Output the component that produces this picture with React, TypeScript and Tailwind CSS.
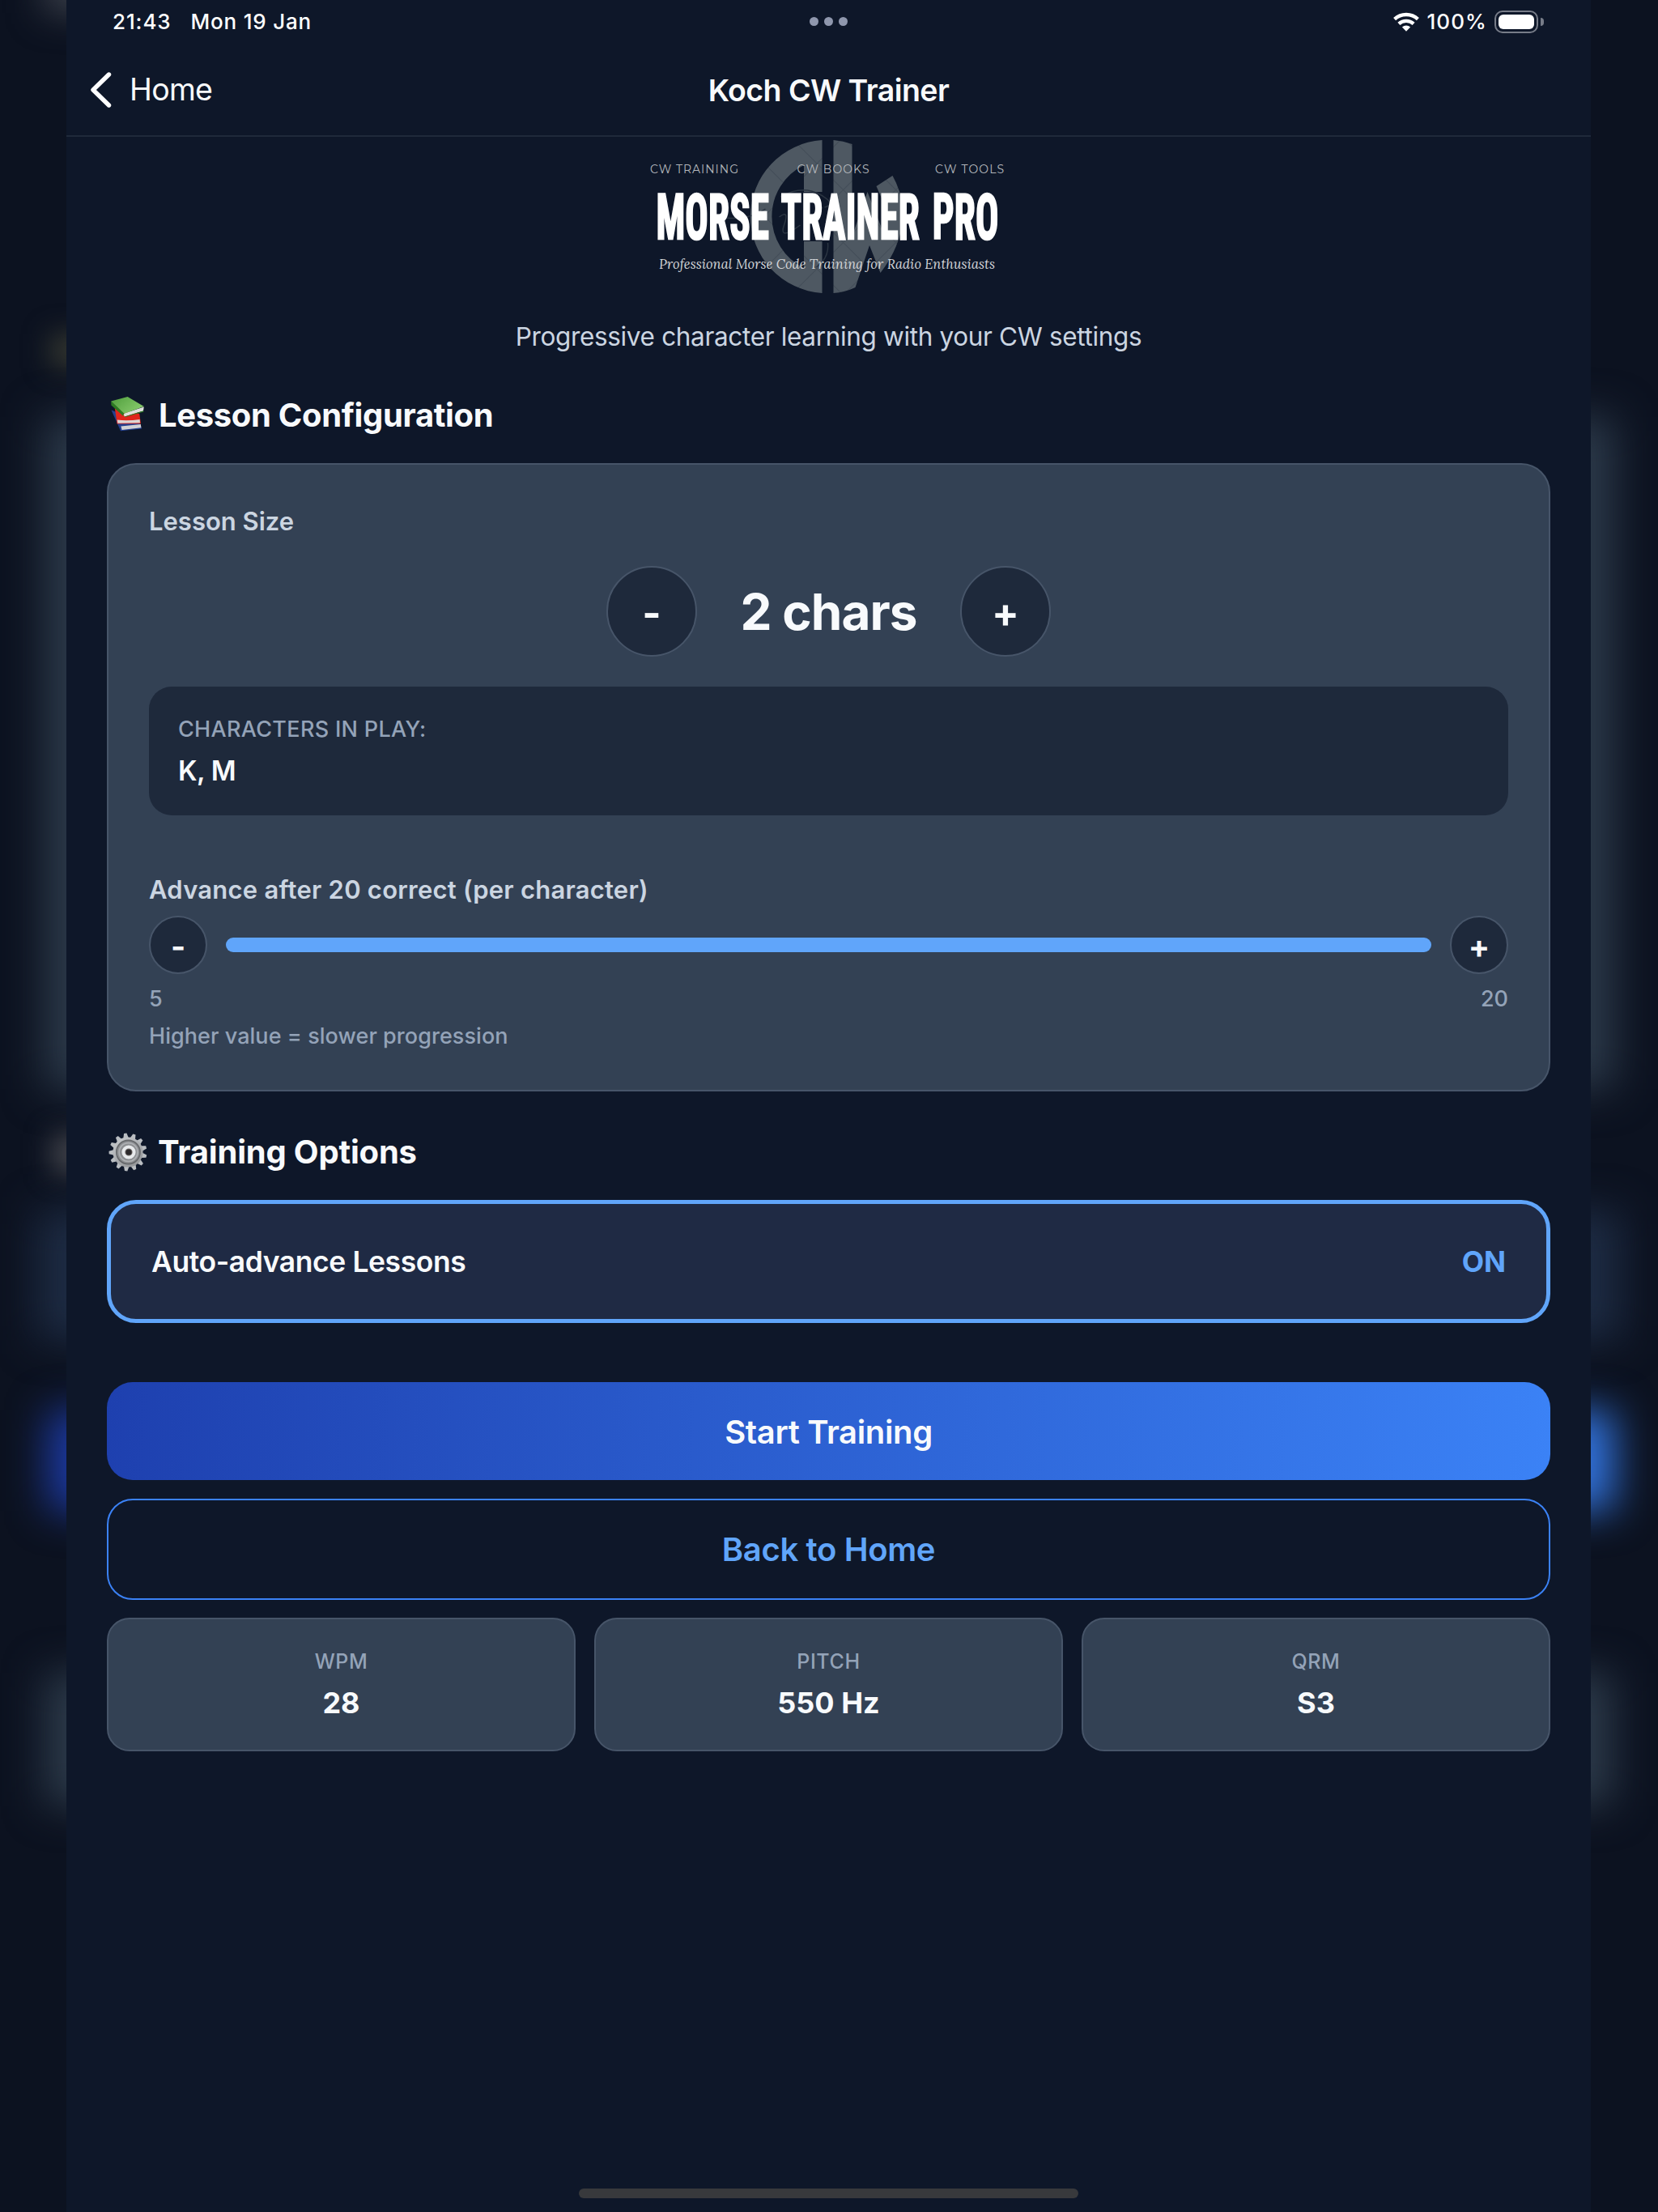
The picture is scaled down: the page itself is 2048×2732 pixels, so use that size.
const stats = [
  { label: 'WPM', value: '28' },
  { label: 'PITCH', value: '550 Hz' },
  { label: 'QRM', value: 'S3' },
]

const gearTeeth = Array.from({ length: 13 }, (_, i) => (i * 360) / 13 - 8)

function WifiIcon() {
  return (
    <svg width="32" height="24" viewBox="0 0 32 24" fill="none">
      <path d="M1.6 8.7A21.2 21.2 0 0 1 30.4 8.7" stroke="#fff" strokeWidth="4.4" />
      <path d="M6.9 14.4A13.4 13.4 0 0 1 25.1 14.4" stroke="#fff" strokeWidth="4.4" />
      <path d="M10.9 18.6A7.4 7.4 0 0 1 21.1 18.6L16 23.8Z" fill="#fff" />
    </svg>
  )
}

function BatteryIcon() {
  return (
    <div className="flex items-center gap-[3px]">
      <div className="h-[28px] w-[54px] rounded-[10px] border-2 border-[#777c88] p-[3px]">
        <div className="h-full w-full rounded-[6px] bg-white" />
      </div>
      <div className="h-[10px] w-[4px] rounded-r-full bg-[#777c88]" />
    </div>
  )
}

function BooksIcon() {
  return (
    <svg width="48" height="48" viewBox="0 0 48 48">
      <defs>
        <linearGradient id="cover" x1="0" y1="0" x2="1" y2="0.6">
          <stop offset="0" stopColor="#4f9e3c" />
          <stop offset="1" stopColor="#86c96b" />
        </linearGradient>
      </defs>
      <path d="M3.5 17.5L15 43.2L41 40.4L39.5 35L10 20Z" fill="#24408f" />
      <path d="M15.4 37.4L39.8 35L40.4 39.2L16.6 42Z" fill="#d0d1d6" />
      <path d="M7.8 15L10.6 34.6L40 34.2L38.2 22L20 18Z" fill="#e0261c" />
      <path d="M10.8 29.6Q24 31 38.6 29L39 33.2L11.4 33.8Z" fill="#dcd6d4" />
      <path d="M3.2 6.6L3.4 11.4L18.6 25.2Q17.6 23 19.8 21.4Z" fill="#2c7a22" />
      <path d="M19.8 21.4L43.8 13.6L43 18.4L20 25.4Q18 23.4 19.8 21.4Z" fill="#dfe2dd" />
      <path d="M3.2 6.6L23.6 1L43.8 13L19.6 21.8Z" fill="url(#cover)" />
      <path d="M20 25.4L43 18.4L43.8 19.6L20.2 26.2Z" fill="#2c7a22" />
    </svg>
  )
}

function GearIcon() {
  return (
    <svg width="48" height="48" viewBox="0 0 48 48">
      <defs>
        <linearGradient id="steel" x1="0" y1="0" x2="0.6" y2="1">
          <stop offset="0" stopColor="#c9cccf" />
          <stop offset="1" stopColor="#96989b" />
        </linearGradient>
      </defs>
      {gearTeeth.map((angle) => (
        <path key={angle} d="M20.6 7L22.3 0.6H25.7L27.4 7Z" fill="#b9bdc1" transform={`rotate(${angle} 24 24)`} />
      ))}
      <circle cx="24" cy="24" r="18.6" fill="url(#steel)" />
      <circle cx="24.4" cy="24" r="14.6" fill="#8d8f92" stroke="#66686b" strokeWidth="1.6" />
      <circle cx="24.6" cy="24" r="11.4" fill="none" stroke="#aeb0b3" strokeWidth="1.6" />
      <circle cx="25" cy="24" r="6.6" fill="#6f6a68" stroke="#e8eaec" strokeWidth="4" />
      <circle cx="25" cy="24" r="3.6" fill="#2d2a2c" />
    </svg>
  )
}

function Logo() {
  return (
    <svg className="mx-auto block shrink-0 overflow-visible" width="480" height="194" viewBox="783.5 169 480 194">
      <defs>
        <pattern id="lattice" width="46" height="46" patternUnits="userSpaceOnUse" patternTransform="rotate(45 1022 267)">
          <rect width="46" height="46" fill="#4e5862" />
          <path d="M0 0H46M0 0V46" stroke="#434d58" strokeWidth="2" />
        </pattern>
      </defs>
      <g fill="url(#lattice)">
        <path d="M1015 173A94.700 94.700 0 0 0 1015 362V298H992.5V331A70.700 70.700 0 0 1 992.5 204V237H1015Z" />
        <path d="M1029 173Q1041 174 1052 178V292L1071 237L1091 288L1096 262L1082 230L1102 217Q1115 240 1115 268Q1112 305 1087 337L1073.500 303L1056 355Q1043 361 1029 362Z" />
      </g>
      <path
        d="M896 269Q925 272 945 258M964 243Q990 228 1012 240T1018 256M1008 330Q1024 318 1022 300M962 268Q975 258 968 278T988 278"
        fill="none"
        stroke="#2b3542"
        strokeWidth="1.500"
      />
      <g fill="#b4b7bc" fontFamily="Montserrat, 'Open Sans', sans-serif" fontSize="14">
        <text x="802.500" y="214" textLength="109">CW TRAINING</text>
        <text x="984" y="214" textLength="89">CW BOOKS</text>
        <text x="1154.500" y="214" textLength="85">CW TOOLS</text>
      </g>
      <text
        transform="translate(810 295) scale(0.605 1)"
        className="font-['Roboto'] font-bold font-stretch-[75%]"
        fontSize="78"
        wordSpacing="8"
        fill="#fff"
        stroke="#fff"
        strokeWidth="2.400"
        textLength="699"
      >
        MORSE TRAINER PRO
      </text>
      <text
        x="813.500"
        y="331.500"
        fontFamily="Lora, 'Liberation Serif', serif"
        fontStyle="italic"
        fontSize="17.500"
        fill="#d3d5d8"
        textLength="415"
        lengthAdjust="spacingAndGlyphs"
      >
        Professional Morse Code Training for Radio Enthusiasts
      </text>
    </svg>
  )
}

// Blurred spill of the page that fills the margin on the left
function LeftMargin() {
  return (
    <div className="relative w-[82px] shrink-0 overflow-hidden bg-[#0c1220]">
      <div className="absolute top-[-40px] left-[54px] h-[56px] w-[120px] bg-[#3a3f49] blur-[22px]" />
      <div className="absolute top-[412px] left-[62px] h-[42px] w-[60px] bg-[#33362f] blur-[16px]" />
      <div className="absolute top-[515px] left-[55px] h-[830px] w-[160px] bg-[#2c3a4a] blur-[26px]" />
      <div className="absolute top-[1400px] left-[64px] h-[50px] w-[60px] bg-[#404249] blur-[16px]" />
      <div className="absolute top-[1495px] left-[46px] h-[160px] w-[160px] bg-[#1d2b43] blur-[25px]" />
      <div className="absolute top-[1742px] left-[60px] h-[124px] w-[160px] bg-[#1c3aa4] blur-[25px]" />
      <div className="absolute top-[2066px] left-[56px] h-[164px] w-[160px] bg-[#2c3a4a] blur-[25px]" />
    </div>
  )
}

function RightMargin() {
  return (
    <div className="relative w-[83px] shrink-0 overflow-hidden bg-[#0c1220]">
      <div className="absolute top-[515px] right-[54px] h-[830px] w-[160px] bg-[#2c3a4a] blur-[26px]" />
      <div className="absolute top-[1495px] right-[46px] h-[160px] w-[160px] bg-[#1d2b43] blur-[25px]" />
      <div className="absolute top-[1742px] right-[54px] h-[124px] w-[160px] bg-[#3273dc] blur-[25px]" />
      <div className="absolute top-[2066px] right-[56px] h-[164px] w-[160px] bg-[#2c3a4a] blur-[25px]" />
    </div>
  )
}

export default function App() {
  return (
    <div className="flex h-[2732px] w-[2048px] overflow-hidden bg-[#0c1220] font-['Inter',sans-serif] text-[#f8fafc]">
      <LeftMargin />

      <div className="flex w-[1883px] shrink-0 flex-col bg-[#0e1729]">
        {/* Status bar */}
        <div className="grid h-[53px] shrink-0 grid-cols-3 items-center text-[26px] leading-[36px] font-medium text-white">
          <div className="flex gap-[24px] pl-[57px]">
            <span className="tracking-[0.9px]">21:43</span>
            <span className="tracking-[0.8px]">Mon 19 Jan</span>
          </div>
          <div className="flex justify-center gap-[7px]">
            <span className="size-[11px] rounded-full bg-[#8f97ad]" />
            <span className="size-[11px] rounded-full bg-[#8f97ad]" />
            <span className="size-[11px] rounded-full bg-[#8f97ad]" />
          </div>
          <div className="flex items-center justify-end pr-[58px]">
            <WifiIcon />
            <span className="mr-[9px] ml-[9px] tracking-[1.1px]">100%</span>
            <BatteryIcon />
          </div>
        </div>

        {/* Header */}
        <header className="grid h-[116px] shrink-0 grid-cols-3 items-center border-b-2 border-[#1f293a] pt-[2px] text-[38px] leading-[48px]">
          <button className="flex items-center pl-[29px]">
            <svg width="28" height="44" viewBox="0 0 28 44" fill="none">
              <path d="M23.500 3L4 22L23.500 41" stroke="#fff" strokeWidth="5.400" strokeLinecap="round" strokeLinejoin="round" />
            </svg>
            <span className="ml-[21px] text-[37.5px] tracking-[-0.7px]">Home</span>
          </button>
          <h1 className="pt-[2px] text-center text-[37.5px] font-semibold tracking-[-0.55px]">Koch CW Trainer</h1>
        </header>

        <Logo />

        <p className="mt-[31px] text-center text-[31.5px] leading-[44px] tracking-[-0.34px] text-[#cbd5e1]">
          Progressive character learning with your CW settings
        </p>

        <main className="flex flex-1 flex-col px-[50px]">
          <h2 className="mt-[51px] flex h-[48px] items-center gap-[14px] pl-[2px] text-[40px] leading-[48px] font-bold tracking-[-0.35px]">
            <BooksIcon />
            Lesson Configuration
          </h2>

          <section className="mt-[35px] h-[776px] shrink-0 rounded-[36px] border-2 border-[#475569] bg-[#334154] px-[50px] pt-[48px]">
            <h3 className="text-[31px] leading-[44px] font-semibold text-[#cbd5e1]">Lesson Size</h3>

            <div className="mt-[33px] flex items-center justify-center">
              <button className="size-[112px] rounded-full border-2 border-[#475569] bg-[#1e293b] pt-[4px] text-[50px] leading-none font-bold">-</button>
              <span className="w-[325px] pt-[1px] text-center text-[62px] leading-[80px] font-bold tracking-[-1px]">2 chars</span>
              <button className="size-[112px] rounded-full border-2 border-[#475569] bg-[#1e293b] pt-[4px] text-[50px] leading-none font-bold">+</button>
            </div>

            <div className="mt-[37px] h-[159px] rounded-[28px] bg-[#1e293b] px-[36px] pt-[33px]">
              <p className="text-[27px] leading-[40px] font-medium tracking-[0.31px] text-[#94a3b8]">CHARACTERS IN PLAY:</p>
              <p className="mt-[7px] text-[33.5px] leading-[48px] font-semibold tracking-[-0.44px]">K, M</p>
            </div>

            <h3 className="mt-[70px] text-[31px] leading-[44px] font-semibold tracking-[0.23px] text-[#cbd5e1]">
              Advance after 20 correct (per character)
            </h3>
            <div className="mt-[10px] flex items-center gap-[23px]">
              <button className="size-[72px] shrink-0 rounded-full border-2 border-[#475569] bg-[#1e293b] pt-[2px] text-[39px] leading-none font-bold">-</button>
              <div className="h-[18px] flex-1 rounded-full bg-[#60a5fa]" />
              <button className="size-[72px] shrink-0 rounded-full border-2 border-[#475569] bg-[#1e293b] pt-[2px] text-[39px] leading-none font-bold">+</button>
            </div>
            <div className="mt-[13px] flex justify-between text-[27px] leading-[36px] font-medium text-[#94a3b8]">
              <span>5</span>
              <span>20</span>
            </div>
            <p className="mt-[10px] text-[27px] leading-[36px] font-medium tracking-[0.05px] text-[#94a3b8]">
              Higher value = slower progression
            </p>
          </section>

          <h2 className="mt-[51px] flex h-[48px] items-center gap-[13px] pl-[2px] text-[40px] leading-[48px] font-bold tracking-[-0.2px]">
            <GearIcon />
            Training Options
          </h2>

          <button className="mt-[35px] flex h-[152px] shrink-0 items-center justify-between rounded-[36px] border-[5px] border-[#60a5fa] bg-[#1f2a44] px-[50px] pt-[2px] text-[35.5px] leading-[48px]">
            <span className="font-semibold tracking-[-0.43px]">Auto-advance Lessons</span>
            <span className="font-bold tracking-[-0.1px] text-[#60a5fa]">ON</span>
          </button>

          <button className="mt-[73px] h-[121px] shrink-0 rounded-[32px] bg-[linear-gradient(94deg,#1e40af,#3b82f6)] pt-[2px] text-[40px] leading-[48px] font-semibold tracking-[-0.35px]">
            Start Training
          </button>
          <button className="mt-[23px] h-[125px] shrink-0 rounded-[32px] border-2 border-[#3b82f6] text-[40px] leading-[48px] font-semibold tracking-[-0.35px] text-[#60a5fa]">
            Back to Home
          </button>

          <div className="mt-[22px] grid grid-cols-3 gap-[23px]">
            {stats.map((stat) => (
              <div key={stat.label} className="h-[165px] rounded-[28px] border-2 border-[#475569] bg-[#334154] pt-[34px] text-center">
                <p className="text-[25px] leading-[36px] font-medium tracking-[0.6px] text-[#94a3b8]">{stat.label}</p>
                <p className="mt-[11px] text-[36px] leading-[44px] font-bold">{stat.value}</p>
              </div>
            ))}
          </div>
        </main>

        {/* Home indicator */}
        <div className="mx-auto mb-[17px] h-[12px] w-[617px] shrink-0 rounded-full bg-[#38393c]" />
      </div>

      <RightMargin />
    </div>
  )
}
